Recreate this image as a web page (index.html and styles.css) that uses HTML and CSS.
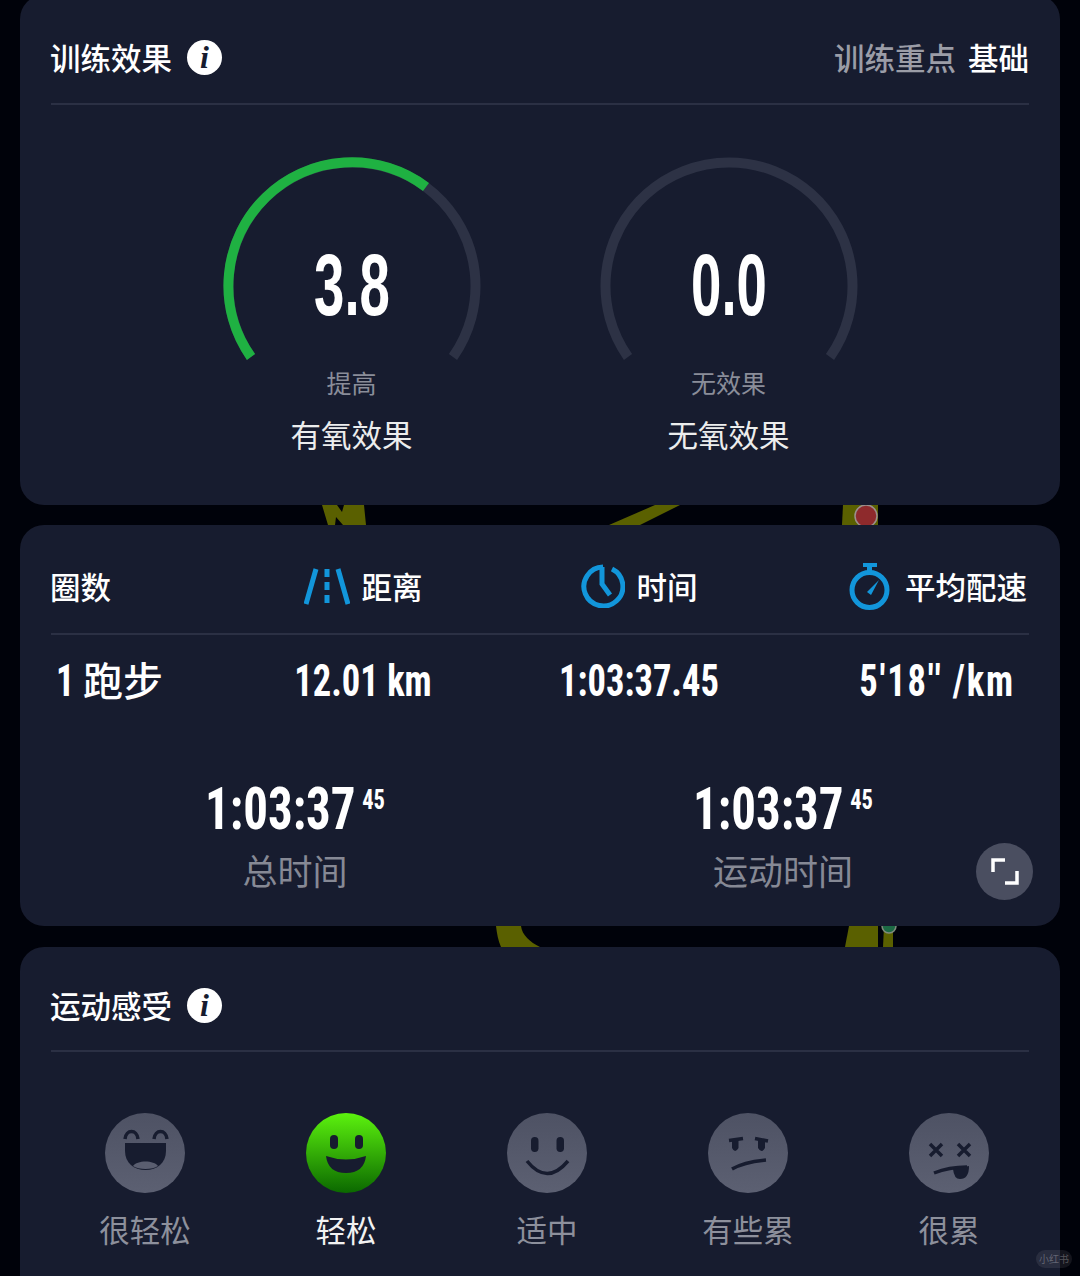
FILE: index.html
```html
<!DOCTYPE html>
<html lang="zh-CN">
<head>
  <meta charset="UTF-8">
  <title>训练效果</title>
  <meta name="viewport" content="width=device-width, initial-scale=1.0">
  <link rel="stylesheet" href="styles.css">
</head>
<body>

  <!-- 训练效果 -->
  <section class="card card-first">
    <div class="card-head">
      <div class="title-wrap">
        <h2 class="card-title">训练效果</h2>
        <span class="info">i</span>
      </div>
      <div class="focus"><span class="focus-label">训练重点</span><span>基础</span></div>
    </div>
    <div class="gauges">
      <div class="gauge">
        <div class="dial">
          <svg class="dial-svg" viewBox="0 0 260 260">
            <path class="dial-track" d="M29 201A123.500 123.500 0 1 1 231 201"/>
            <path class="dial-fill" d="M29 201A123.500 123.500 0 0 1 204 31"/>
          </svg>
          <span class="dial-num">3.8</span>
        </div>
        <div class="dial-state">提高</div>
        <div class="dial-name">有氧效果</div>
      </div>
      <div class="gauge">
        <div class="dial">
          <svg class="dial-svg" viewBox="0 0 260 260">
            <path class="dial-track" d="M29 201A123.500 123.500 0 1 1 231 201"/>
          </svg>
          <span class="dial-num">0.0</span>
        </div>
        <div class="dial-state">无效果</div>
        <div class="dial-name">无氧效果</div>
      </div>
    </div>
  </section>

  <!-- 地图露出的部分 -->
  <svg class="map-strip" viewBox="0 505 1080 20">
    <path class="road" d="M322 505H337L342 512L344 505H364L366 525H343L336 517L335 525H328Z"/>
    <path class="road" d="M609 525L655 505H680L640 525Z"/>
    <path class="road" d="M843 505H878V525H842Z"/>
    <circle class="pin-red" cx="866" cy="516" r="11"/>
  </svg>

  <!-- 圈数 -->
  <section class="card card-laps">
    <div class="lap-grid lap-head">
      <div class="lap-cell lap-cell-start">圈数</div>
      <div class="lap-cell">
        <svg class="icon" width="46" height="37" viewBox="0 0 46 37">
          <path d="M2 36L12 1M44 36L34 1"/>
          <path d="M23 1V9M23 14V22M23 27V35"/>
        </svg>
        距离
      </div>
      <div class="lap-cell">
        <svg class="icon" width="44" height="44" viewBox="0 0 44 44">
          <path d="M22 3A19.5 19.5 0 1 0 31 5"/>
          <path d="M21 3V20L29 31"/>
        </svg>
        时间
      </div>
      <div class="lap-cell lap-cell-end">
        <svg class="icon" width="41" height="47" viewBox="0 0 41 47">
          <circle cx="20.5" cy="27" r="17.5"/>
          <path class="icon-solid" d="M14 0H28V4H23V9H18V4H14Z"/>
          <path class="icon-solid" d="M30 17L22 32L18 29Z"/>
        </svg>
        平均配速
      </div>
    </div>
    <div class="lap-grid lap-row">
      <div class="lap-val lap-val-start"><span class="num lap-index">1</span><span class="lap-type">跑步</span></div>
      <div class="lap-val num squeeze">12.01 km</div>
      <div class="lap-val num squeeze">1:03:37.45</div>
      <div class="lap-val lap-val-end num squeeze">5'18'' /km</div>
    </div>
    <div class="totals">
      <div class="total">
        <div class="total-num num squeeze">1:03:37<sup class="total-sup">45</sup></div>
        <div class="total-name">总时间</div>
      </div>
      <div class="total">
        <div class="total-num num squeeze">1:03:37<sup class="total-sup">45</sup></div>
        <div class="total-name">运动时间</div>
      </div>
    </div>
    <button class="expand">
      <svg width="28" height="27" viewBox="0 0 28 27">
        <path d="M2 14V2H14M14 25H26V13"/>
      </svg>
    </button>
  </section>

  <svg class="map-strip map-strip-tall" viewBox="0 926 1080 21">
    <path class="road" d="M496 926H521C522 935 530 942 540 947H501C498 940 497 934 496 926Z"/>
    <path class="road" d="M849 926H878V947H845Z"/>
    <path class="road" d="M884 926H893V947H883Z"/>
    <circle class="pin-green" cx="889" cy="926" r="7"/>
  </svg>

  <!-- 运动感受 -->
  <section class="card card-feel">
    <div class="card-head">
      <div class="title-wrap">
        <h2 class="card-title">运动感受</h2>
        <span class="info">i</span>
      </div>
    </div>
    <div class="feel-grid">
      <div class="feel">
        <svg class="face" viewBox="0 0 80 80">
          <path class="face-line" d="M20 26C21 16 32 16 33 26M49 26C50 16 61 16 62 26"/>
          <path class="face-mark" d="M20 30H61V38C61 50 52 57 40.5 57S20 50 20 38Z"/>
          <path class="face-tongue" d="M28 53C32 47 49 47 53 53C48 57 33 57 28 53Z"/>
        </svg>
        <div class="feel-name">很轻松</div>
      </div>
      <div class="feel feel-on">
        <svg class="face" viewBox="0 0 80 80">
          <rect class="face-mark" x="24" y="22" width="8" height="14" rx="4"/>
          <rect class="face-mark" x="49" y="22" width="8" height="14" rx="4"/>
          <path class="face-mark" d="M20 43Q40 50 60 43Q58 60 40 60Q22 60 20 43Z"/>
        </svg>
        <div class="feel-name">轻松</div>
      </div>
      <div class="feel">
        <svg class="face" viewBox="0 0 80 80">
          <rect class="face-mark" x="24" y="24" width="7.5" height="15" rx="3.7"/>
          <rect class="face-mark" x="49.5" y="24" width="7.5" height="15" rx="3.7"/>
          <path class="face-line" d="M20 48Q40 73 61 48"/>
        </svg>
        <div class="feel-name">适中</div>
      </div>
      <div class="feel">
        <svg class="face" viewBox="0 0 80 80">
          <path class="face-line" d="M21 27.500L35 25.500M47 25.500L60 28"/>
          <path class="face-mark" d="M24 27H30.500V35Q27 41 24 35ZM50 27H57V35Q53.500 41 50 35Z"/>
          <path class="face-line" d="M24 56Q36 49 58 47"/>
        </svg>
        <div class="feel-name">有些累</div>
      </div>
      <div class="feel">
        <svg class="face" viewBox="0 0 80 80">
          <path class="face-line" d="M21 31L33 43M33 31L21 43M49 31L61 43M61 31L49 43"/>
          <path class="face-line" d="M25 60Q40 54 58 54"/>
          <path class="face-mark" d="M44 56L60 53Q60 66 51 66Q45 66 44 56Z"/>
        </svg>
        <div class="feel-name">很累</div>
      </div>
    </div>
  </section>

  <div class="mark">小红书</div>

</body>
</html>
```

FILE: styles.css
```css
* { margin: 0; padding: 0; box-sizing: border-box; }
html, body { height: 100%; }
body {
  font-family: "Noto Sans CJK SC", "Noto Sans", sans-serif;
  background: #00020a;
  color: #fff;
  overflow: hidden;
  position: relative;
}

.num {
  font-family: "Liberation Sans Narrow", "Roboto Condensed", "Liberation Sans", sans-serif;
  font-weight: 700;
}
.squeeze { transform: scaleX(.83); }

.card {
  background: #171c2f;
  border-radius: 24px;
  margin: 0 20px;
  padding: 0 31px;
  position: relative;
}
.card-first { margin-top: -5px; height: 510px; }
.card-laps { height: 401px; }
.card-feel { height: 360px; }

.card-head {
  height: 105px;
  display: flex;
  align-items: center;
  justify-content: space-between;
  border-bottom: 2px solid #2b3044;
  padding-top: 14px;
  font-size: 30.5px;
  font-weight: 500;
  line-height: 1;
}
.card-first .card-head { height: 110px; padding-top: 16px; }
.title-wrap { display: flex; align-items: center; gap: 15px; margin-left: -1px; }
.card-title { font-size: 30.5px; font-weight: 500; }
.info {
  width: 35px;
  height: 35px;
  border-radius: 50%;
  background: #fff;
  color: #171c2f;
  font-family: "Liberation Serif", serif;
  font-style: italic;
  font-weight: 700;
  font-size: 32px;
  line-height: 35px;
  text-align: center;
}
.focus { display: flex; gap: 12px; }
.focus-label { color: #9b9da7; }

.gauges {
  display: grid;
  grid-template-columns: 377px 377px;
  justify-content: center;
  padding-top: 51px;
}
.gauge { display: flex; flex-direction: column; align-items: center; }
.dial { width: 260px; height: 202px; position: relative; }
.dial-svg { width: 260px; height: 260px; display: block; }
.dial-track, .dial-fill { fill: none; stroke-width: 10; }
.dial-track { stroke: #2d3245; }
.dial-fill { stroke: #1fb142; }
.dial-num {
  position: absolute;
  left: 0;
  right: 0;
  top: 129px;
  transform: translateY(-50%) scaleX(.62);
  text-align: center;
  font-family: "Liberation Sans Narrow", "Liberation Sans", sans-serif;
  font-weight: 700;
  font-size: 88px;
  line-height: 1;
}
.dial-state {
  margin-top: 6px;
  font-size: 25px;
  line-height: 36px;
  color: #8a8d99;
}
.dial-name {
  margin-top: 13px;
  font-size: 30.5px;
  line-height: 42px;
  color: #eceded;
}

.map-strip { display: block; width: 1080px; height: 20px; }
.map-strip-tall { height: 21px; }
.road { fill: #5a6000; }
.pin-red { fill: #8e2a2c; stroke: #9a8f8c; stroke-width: 1.5; }
.pin-green { fill: #1c6a44; stroke: #7f8a7c; stroke-width: 1.5; }

.lap-grid {
  display: grid;
  grid-template-columns: 174px 276px 276px 1fr;
  align-items: center;
}
.lap-head {
  height: 110px;
  padding-top: 14px;
  border-bottom: 2px solid #2b3044;
  font-size: 30.5px;
  font-weight: 500;
}
.lap-cell { display: flex; align-items: center; justify-content: center; gap: 12px; }
.lap-cell-start { justify-content: flex-start; margin-left: -1px; }
.lap-cell-end { justify-content: flex-end; padding-right: 2px; gap: 15px; }
.icon { display: block; fill: none; stroke: #1296db; stroke-width: 5; }
.icon-solid { fill: #1296db; stroke: none; }

.lap-row { height: 92px; }
.lap-val { font-size: 44px; line-height: 1; text-align: center; }
.lap-val-start { text-align: left; padding-left: 5px; display: flex; align-items: center; gap: 11px; }
.lap-val-end {
  text-align: right;
  padding-right: 17px;
  letter-spacing: 2.2px;
  transform-origin: right center;
}
.lap-index { display: inline-block; transform: scaleX(.83); transform-origin: left center; width: 16px; }
.lap-type { font-size: 40px; font-weight: 500; padding-bottom: 4px; }

.totals {
  display: grid;
  grid-template-columns: 488px 488px;
  margin-top: 46px;
}
.total { text-align: center; }
.total-num { font-size: 59px; line-height: 72px; }
.total-sup { font-size: 27px; line-height: 1; vertical-align: 20px; margin-left: 8px; }
.total-name { font-size: 35px; line-height: 50px; color: #868995; }

.expand {
  position: absolute;
  right: 27px;
  top: 318px;
  width: 57px;
  height: 57px;
  border: none;
  border-radius: 50%;
  background: #4a4e60;
  display: flex;
  align-items: center;
  justify-content: center;
}
.expand svg { fill: none; stroke: #fff; stroke-width: 3.5; }

.feel-grid {
  display: grid;
  grid-template-columns: repeat(5, 201px);
  margin: 61px -6.5px 0;
}
.feel { display: flex; flex-direction: column; align-items: center; }
.face {
  width: 80px;
  height: 80px;
  display: block;
  border-radius: 50%;
  background: linear-gradient(#4e5264, #5c6072);
}
.feel-on .face { background: linear-gradient(#5cf20e, #0b6800); }
.face-mark { fill: #171c2f; }
.face-line { fill: none; stroke: #171c2f; stroke-width: 3.5; }
.face-tongue { fill: #5a5e70; }
.feel-name {
  margin-top: 15px;
  font-size: 30.5px;
  line-height: 42px;
  color: #8d909c;
}
.feel-on .feel-name { color: #f2f2f2; }

.mark {
  position: absolute;
  right: 8px;
  bottom: 8px;
  width: 36px;
  height: 18px;
  border-radius: 9px;
  background: rgba(255, 255, 255, .08);
  color: rgba(255, 255, 255, .28);
  font-size: 10px;
  line-height: 18px;
  text-align: center;
}
```
